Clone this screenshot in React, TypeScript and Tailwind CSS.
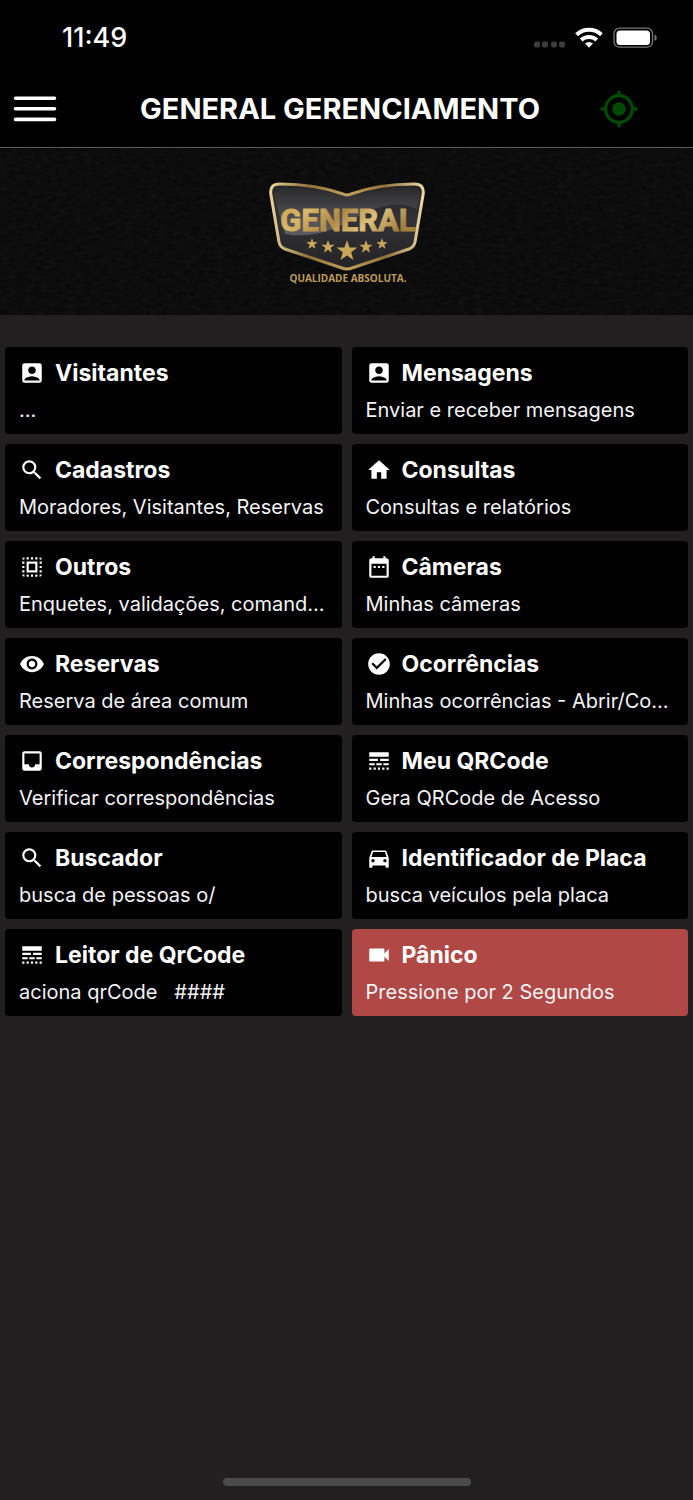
import type { IconType } from "react-icons";
import {
  MdAccountBox,
  MdCheckCircle,
  MdDateRange,
  MdDirectionsCar,
  MdHome,
  MdInbox,
  MdLineStyle,
  MdMyLocation,
  MdSearch,
  MdSelectAll,
  MdVideocam,
  MdVisibility,
} from "react-icons/md";

interface MenuItem {
  icon: IconType;
  title: string;
  description: string;
  danger?: boolean;
}

const items: MenuItem[] = [
  { icon: MdAccountBox, title: "Visitantes", description: "..." },
  {
    icon: MdAccountBox,
    title: "Mensagens",
    description: "Enviar e receber mensagens",
  },
  {
    icon: MdSearch,
    title: "Cadastros",
    description: "Moradores, Visitantes, Reservas",
  },
  { icon: MdHome, title: "Consultas", description: "Consultas e relatórios" },
  {
    icon: MdSelectAll,
    title: "Outros",
    description: "Enquetes, validações, comand...",
  },
  { icon: MdDateRange, title: "Câmeras", description: "Minhas câmeras" },
  { icon: MdVisibility, title: "Reservas", description: "Reserva de área comum" },
  {
    icon: MdCheckCircle,
    title: "Ocorrências",
    description: "Minhas ocorrências - Abrir/Co...",
  },
  {
    icon: MdInbox,
    title: "Correspondências",
    description: "Verificar correspondências",
  },
  { icon: MdLineStyle, title: "Meu QRCode", description: "Gera QRCode de Acesso" },
  { icon: MdSearch, title: "Buscador", description: "busca de pessoas o/" },
  {
    icon: MdDirectionsCar,
    title: "Identificador de Placa",
    description: "busca veículos pela placa",
  },
  {
    icon: MdLineStyle,
    title: "Leitor de QrCode",
    description: "aciona qrCode   ####",
  },
  {
    icon: MdVideocam,
    title: "Pânico",
    description: "Pressione por 2 Segundos",
    danger: true,
  },
];

const stars = [
  { x: 65, y: 79, r: 6 },
  { x: 81, y: 82, r: 7 },
  { x: 100, y: 86, r: 11 },
  { x: 119, y: 82, r: 7 },
  { x: 135, y: 79, r: 6 },
];

function starPoints(cx: number, cy: number, r: number) {
  return Array.from({ length: 10 }, (_, i) => {
    const radius = i % 2 === 0 ? r : r * 0.4;
    const angle = (Math.PI / 5) * i - Math.PI / 2;
    return `${cx + radius * Math.cos(angle)},${cy + radius * Math.sin(angle)}`;
  }).join(" ");
}

function StatusBar() {
  return (
    <div className="flex h-[76px] items-center justify-between pr-9 pl-[62px]">
      <span className="text-[27px] leading-8 font-medium">11:49</span>

      <svg width="124" height="24" viewBox="0 0 124 24" aria-hidden="true">
        <g fill="#3c3c3c">
          <rect x="1" y="15.5" width="6" height="6" rx="2" />
          <rect x="9" y="15.5" width="6" height="6" rx="2" />
          <rect x="18" y="15.5" width="6" height="6" rx="2" />
          <rect x="26" y="15.5" width="6" height="6" rx="2" />
        </g>
        <g fill="none" stroke="#fff" strokeWidth="4">
          <path d="M43.6 8.7a18.3 18.3 0 0 1 24.8 0" />
          <path d="M48.2 14a11.6 11.6 0 0 1 15.6 0" />
        </g>
        <path d="M56 21.8l-4-4.2a5.8 5.8 0 0 1 8 0z" fill="#fff" />
        <rect
          x="81"
          y="2.2"
          width="38.5"
          height="19"
          rx="5.5"
          fill="none"
          stroke="#777"
          strokeWidth="1.3"
        />
        <rect x="83.5" y="4.5" width="33.5" height="14.4" rx="3.5" fill="#fff" />
        <path d="M121.5 8.5v6.4a3.4 3.4 0 0 0 0-6.4z" fill="#777" />
      </svg>
    </div>
  );
}

function Logo() {
  return (
    <svg width="200" height="120" viewBox="0 0 200 120" role="img" aria-label="General">
      <defs>
        <linearGradient id="gold" x1="0" y1="0" x2="1" y2="0.3">
          <stop offset="0" stopColor="#c9a052" />
          <stop offset="0.25" stopColor="#d9b76a" />
          <stop offset="0.5" stopColor="#b08a45" />
          <stop offset="0.75" stopColor="#dcc07c" />
          <stop offset="1" stopColor="#a3803f" />
        </linearGradient>
        <linearGradient id="rim" x1="0" y1="0" x2="1" y2="0">
          <stop offset="0" stopColor="#e9d39a" />
          <stop offset="0.25" stopColor="#8f713a" />
          <stop offset="0.5" stopColor="#c2a25a" />
          <stop offset="0.75" stopColor="#8f713a" />
          <stop offset="1" stopColor="#ecd9a4" />
        </linearGradient>
        <linearGradient id="shield" x1="0" y1="0" x2="0" y2="1">
          <stop offset="0" stopColor="#242326" />
          <stop offset="0.45" stopColor="#323135" />
          <stop offset="1" stopColor="#232225" />
        </linearGradient>
        <linearGradient id="gloss" x1="0" y1="0" x2="0" y2="1">
          <stop offset="0" stopColor="#fff" stopOpacity="0.02" />
          <stop offset="1" stopColor="#fff" stopOpacity="0.22" />
        </linearGradient>
      </defs>
      <path
        d="M33 19Q68 19 96 29Q100 31 104 29Q132 19 167 19Q178 19 176 30L168 77Q167 82 162 84L105 103Q100 105 95 103L38 84Q33 82 32 77L24 30Q22 19 33 19Z"
        fill="url(#shield)"
        stroke="url(#rim)"
        strokeWidth="3"
      />
      <path
        d="M33 22Q66 22 100 32Q134 22 167 22Q174 23 173 31L170 44Q150 34 118 47Q75 76 38 69L27 31Q26 22 33 22Z"
        fill="url(#gloss)"
      />
      <text
        x="101"
        y="66"
        textAnchor="middle"
        fill="url(#gold)"
        stroke="url(#gold)"
        strokeWidth="1"
        className="font-['Roboto',sans-serif] text-[31px] font-bold"
      >
        GENERAL
      </text>
      {stars.map((star) => (
        <polygon
          key={star.x}
          points={starPoints(star.x, star.y, star.r)}
          fill="#c9a558"
        />
      ))}
      <text
        x="101"
        y="117"
        textAnchor="middle"
        fill="#bd9b58"
        className="font-['Open_Sans',sans-serif] text-[10px] font-bold"
      >
        QUALIDADE ABSOLUTA.
      </text>
    </svg>
  );
}

function Banner() {
  return (
    <section className="relative flex h-[167px] justify-center overflow-hidden bg-[#080808] pt-[17px]">
      {/* leather grain */}
      <svg className="absolute inset-0 size-full opacity-5" aria-hidden="true">
        <filter id="leather">
          <feTurbulence type="fractalNoise" baseFrequency="0.12 0.25" numOctaves="4" />
          <feColorMatrix type="saturate" values="0" />
        </filter>
        <rect width="100%" height="100%" filter="url(#leather)" />
      </svg>
      <div className="relative">
        <Logo />
      </div>
    </section>
  );
}

function MenuCard({ icon: Icon, title, description, danger }: MenuItem) {
  return (
    <button
      type="button"
      className={`flex min-w-0 flex-col gap-1.5 rounded px-3.5 pt-2.5 pb-[9px] text-left ${
        danger ? "bg-[#b04846]" : "bg-black"
      }`}
    >
      <span className="flex items-center gap-2.5">
        <Icon className="size-[26px] shrink-0" />
        <span className="text-[23px] leading-8 font-bold whitespace-nowrap">
          {title}
        </span>
      </span>
      <span className="w-full truncate text-[20px] leading-[30px] whitespace-pre text-gray-100">
        {description}
      </span>
    </button>
  );
}

export default function App() {
  return (
    <div className="flex min-h-screen flex-col bg-[#211f20] font-['Inter',sans-serif] text-white">
      <header className="border-b border-[#5a5a5a] bg-black">
        <StatusBar />
        <div className="flex h-[71px] items-center justify-between pr-[54px] pb-1.5 pl-[13px]">
          <button type="button" aria-label="Menu">
            <svg width="44" height="28" viewBox="0 0 44 28" aria-hidden="true">
              <path
                d="M2.5 3.2h39M2.5 13.8h39M2.5 24.4h39"
                stroke="#fff"
                strokeWidth="3.6"
                strokeLinecap="round"
              />
            </svg>
          </button>
          <h1 className="ml-6 text-[29px] leading-9 font-bold">
            GENERAL GERENCIAMENTO
          </h1>
          <button type="button" aria-label="Localização">
            <MdMyLocation className="size-10 text-[#004a00]" />
          </button>
        </div>
      </header>

      <Banner />

      <main className="grid grid-cols-2 gap-2.5 px-[5px] pt-8">
        {items.map((item) => (
          <MenuCard key={item.title} {...item} />
        ))}
      </main>

      <div className="mx-auto mt-auto mb-[14px] h-2 w-[248px] rounded-full bg-[#4b4b4b]" />
    </div>
  );
}
